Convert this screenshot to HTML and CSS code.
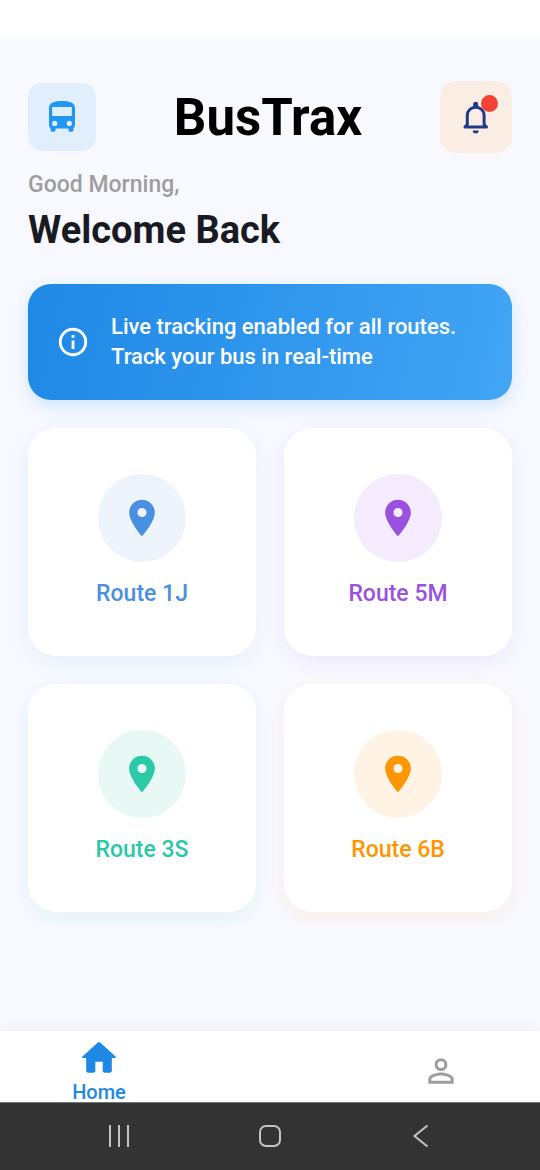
FILE: index.html
```html
<!DOCTYPE html>
<html lang="en">
<head>
<meta charset="utf-8">
<meta name="viewport" content="width=device-width, initial-scale=1">
<title>BusTrax</title>
<link rel="stylesheet" href="styles.css">
</head>
<body>
<svg class="sprite" aria-hidden="true">
  <symbol id="pin" viewBox="0 0 24 24"><path fill="currentColor" d="M12 2C8.130 2 5 5.130 5 9c0 5.250 7 13 7 13s7-7.750 7-13c0-3.870-3.130-7-7-7zm0 9.500a2.500 2.500 0 0 1 0-5 2.500 2.500 0 0 1 0 5z"/></symbol>
</svg>
<div class="app">
  <div class="status"></div>
  <main class="content">
    <header class="header">
      <div class="logo">
        <svg class="icon-40" viewBox="0 0 40 40" aria-hidden="true"><path fill="currentColor" fill-rule="evenodd" d="M7 11c0-5.500 6-7 13-7s13 1.500 13 7v16.500c0 1.600-.6 2.800-1.500 3.700V33c0 1.100-.7 1.700-1.700 1.700h-1.600c-1 0-1.700-.6-1.700-1.700v-1.500h-13V33c0 1.100-.7 1.700-1.700 1.700h-1.600c-1 0-1.700-.6-1.700-1.700v-1.800C7.600 30.300 7 29.100 7 27.500zM10.200 10v9h19.600v-9zM12.700 23.800a2.600 2.600 0 1 0 0 5.200 2.600 2.600 0 0 0 0-5.200zM27.300 23.800a2.600 2.600 0 1 0 0 5.200 2.600 2.600 0 0 0 0-5.200z"/></svg>
      </div>
      <h1 class="brand">BusTrax</h1>
      <button class="bell" type="button" aria-label="Notifications">
        <svg class="icon-40" viewBox="0 0 40 40" aria-hidden="true"><path fill="none" stroke="currentColor" stroke-width="3" stroke-linejoin="round" stroke-linecap="round" d="M9 30h21.500M9 30l2.300-2.500V18.500c0-5 3.600-8.300 8.400-8.300s8.400 3.300 8.400 8.300v9l2.400 2.500"/><path fill="currentColor" d="M17.200 10V7.300a2.500 2.500 0 0 1 5 0V10zM16.700 33.500h6a3 3 0 0 1-6 0z"/></svg>
        <span class="dot"></span>
      </button>
    </header>
    <p class="greeting">Good Morning,</p>
    <h2 class="welcome">Welcome Back</h2>
    <section class="banner">
      <svg class="banner-icon" viewBox="0 0 24 24" aria-hidden="true"><path fill="currentColor" d="M11 7h2v2h-2zm0 4h2v6h-2zm1-9a10 10 0 1 0 0 20 10 10 0 0 0 0-20zm0 18a8 8 0 1 1 0-16 8 8 0 0 1 0 16z"/></svg>
      <p class="banner-text">Live tracking enabled for all routes.<br>Track your bus in real-time</p>
    </section>
    <section class="routes">
      <button class="card blue" type="button"><span class="disc"><svg class="pin" aria-hidden="true"><use href="#pin"/></svg></span><span class="name">Route 1J</span></button>
      <button class="card purple" type="button"><span class="disc"><svg class="pin" aria-hidden="true"><use href="#pin"/></svg></span><span class="name">Route 5M</span></button>
      <button class="card green" type="button"><span class="disc"><svg class="pin" aria-hidden="true"><use href="#pin"/></svg></span><span class="name">Route 3S</span></button>
      <button class="card orange" type="button"><span class="disc"><svg class="pin" aria-hidden="true"><use href="#pin"/></svg></span><span class="name">Route 6B</span></button>
    </section>
  </main>
  <nav class="tabs">
    <a class="tab active" href="#home">
      <svg class="icon-44" viewBox="0 0 24 24" aria-hidden="true"><path fill="currentColor" d="M10 19v-5h4v5c0 .55.45 1 1 1h3c.55 0 1-.45 1-1v-7h1.700c.46 0 .68-.57.33-.87L12.670 3.600c-.38-.34-.96-.34-1.340 0l-8.360 7.530c-.34.300-.13.870.33.870H5v7c0 .55.45 1 1 1h3c.55 0 1-.45 1-1z"/></svg>
      <span>Home</span>
    </a>
    <a class="tab profile" href="#profile" aria-label="Profile">
      <svg class="icon-38" viewBox="0 0 24 24" aria-hidden="true"><path fill="currentColor" d="M12 5.900a2.100 2.100 0 1 1 0 4.200 2.100 2.100 0 0 1 0-4.200m0 9c2.970 0 6.100 1.460 6.100 2.100v1.100H5.900V17c0-.64 3.130-2.100 6.100-2.100M12 4C9.790 4 8 5.790 8 8s1.790 4 4 4 4-1.790 4-4-1.790-4-4-4zm0 9c-2.670 0-8 1.340-8 4v3h16v-3c0-2.660-5.330-4-8-4z"/></svg>
    </a>
  </nav>
  <div class="system">
    <button type="button" aria-label="Recent apps"><svg class="key" viewBox="0 0 24 24"><path d="M3 1v22M12 1v22M21 1v22"/></svg></button>
    <button type="button" aria-label="Home screen"><svg class="key" viewBox="0 0 24 24"><rect x="2" y="2" width="20" height="20" rx="6"/></svg></button>
    <button type="button" aria-label="Back"><svg class="key" viewBox="0 0 24 24"><path d="M18.500 1.500L5.500 12l13 10.500"/></svg></button>
  </div>
</div>
</body>
</html>
```
FILE: styles.css
```css
* {
  box-sizing: border-box;
}

body,
h1,
h2,
p {
  margin: 0;
}

body {
  font-family: Roboto, "Noto Sans", sans-serif;
  background: #f8f9ff;
}

button {
  border: 0;
  padding: 0;
  background: none;
  font: inherit;
  color: inherit;
}

svg {
  display: block;
}

.sprite {
  position: absolute;
  width: 0;
  height: 0;
}

.icon-38 {
  width: 38px;
  height: 38px;
}

.icon-40 {
  width: 40px;
  height: 40px;
}

.icon-44 {
  width: 44px;
  height: 44px;
}

.app {
  display: flex;
  flex-direction: column;
  min-height: 100vh;
}

.status {
  height: 39px;
  background: #fff;
}

.content {
  flex: 1;
  padding: 42px 28px 28px;
}

.header {
  display: flex;
  align-items: center;
  justify-content: space-between;
}

.logo {
  padding: 14px;
  border-radius: 14px;
  background: #e1effd;
  color: #2196f3;
}

.brand {
  padding-top: 2px;
  font-size: 51px;
  line-height: 60px;
  font-weight: 700;
  color: #000;
}

.bell {
  position: relative;
  padding: 16px;
  border-radius: 16px;
  background: #faeee4;
  color: #1f3a8a;
}

.dot {
  position: absolute;
  top: 14px;
  right: 14px;
  width: 17px;
  height: 17px;
  border-radius: 50%;
  background: #f44336;
}

.greeting {
  margin-top: 17px;
  font-size: 23px;
  line-height: 30px;
  font-weight: 500;
  color: #9e9e9e;
}

.welcome {
  margin-top: 4px;
  font-size: 38px;
  line-height: 52px;
  font-weight: 700;
  color: #1a1a22;
}

.banner {
  display: flex;
  align-items: center;
  gap: 21px;
  margin-top: 28px;
  padding: 28px;
  border-radius: 23px;
  background: linear-gradient(103deg, #1e88e5, #42a5f5);
  box-shadow: 0 6px 17px rgba(33, 150, 243, 0.2);
  color: #fff;
}

.banner-icon {
  flex: none;
  width: 34px;
  height: 34px;
}

.banner-text {
  font-size: 22px;
  line-height: 30px;
  font-weight: 500;
}

.routes {
  display: grid;
  grid-template-columns: 1fr 1fr;
  gap: 28px;
  margin-top: 28px;
}

.card {
  display: flex;
  flex-direction: column;
  align-items: center;
  justify-content: center;
  gap: 16px;
  aspect-ratio: 1;
  border-radius: 28px;
  background: #fff;
}

.disc {
  padding: 22px;
  border-radius: 50%;
}

.pin {
  width: 44px;
  height: 44px;
}

.name {
  font-size: 23px;
  line-height: 32px;
  font-weight: 500;
}

.blue {
  color: #4a90e2;
  box-shadow: 0 6px 20px rgba(74, 144, 226, 0.1);
}

.blue .disc {
  background: #edf4fc;
}

.purple {
  color: #9b51e0;
  box-shadow: 0 6px 20px rgba(155, 81, 224, 0.1);
}

.purple .disc {
  background: #f4ecfc;
}

.green {
  color: #2ac9a8;
  box-shadow: 0 6px 20px rgba(42, 201, 168, 0.1);
}

.green .disc {
  background: #e8f8f5;
}

.orange {
  color: #ff9500;
  box-shadow: 0 6px 20px rgba(255, 149, 0, 0.1);
}

.orange .disc {
  background: #fff3e5;
}

.tabs {
  display: flex;
  justify-content: space-between;
  padding: 5px 59px 0;
  background: #fff;
  box-shadow: 0 -2px 14px rgba(0, 0, 0, 0.03);
}

.tab {
  display: flex;
  flex-direction: column;
  align-items: center;
  justify-content: center;
  gap: 2px;
  width: 80px;
  color: #9e9e9e;
  font-size: 20px;
  line-height: 20px;
  font-weight: 500;
  text-decoration: none;
}

.active {
  color: #1e88e5;
}

.profile {
  padding-top: 4px;
}

.system {
  display: grid;
  grid-template-columns: repeat(3, 1fr);
  padding: 21px 8% 22px;
  background: #333;
  border-top: 1px solid #777;
}

.system button {
  display: flex;
  justify-content: center;
}

.key {
  width: 24px;
  height: 24px;
  fill: none;
  stroke: #c4c4c4;
  stroke-width: 2;
}
```
